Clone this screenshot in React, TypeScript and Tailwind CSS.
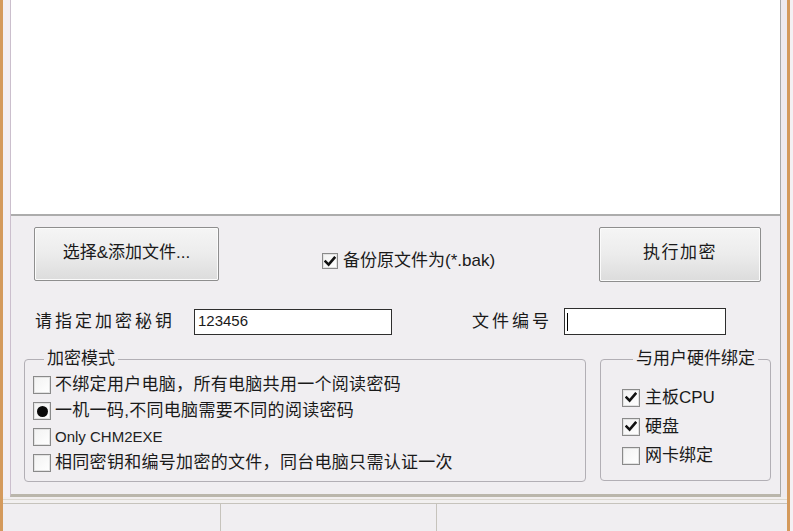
import React from 'react'

function CheckBox({ checked = false, size = 18 }: { checked?: boolean; size?: number }) {
  return (
    <span
      className="shrink-0 flex items-center justify-center border border-[#8a8a8a] bg-linear-to-br from-[#f2f2f2] to-white shadow-[inset_0_0_0_1px_#e2e2e2]"
      style={{ width: size, height: size }}
    >
      {checked && (
        <svg width="12" height="11" viewBox="0 0 12 11">
          <path d="M1.6 5.6 L4.6 8.6 L10.4 1.8" fill="none" stroke="#111" strokeWidth="2.6" strokeLinecap="square" />
        </svg>
      )}
    </span>
  )
}

function RadioBox({ checked = false }: { checked?: boolean }) {
  return (
    <span className="w-[18px] h-[18px] shrink-0 flex items-center justify-center border border-[#8a8a8a] bg-linear-to-br from-[#f2f2f2] to-white shadow-[inset_0_0_0_1px_#e2e2e2]">
      {checked && <span className="w-[11px] h-[11px] rounded-full bg-[#0a0a0a]" />}
    </span>
  )
}

function Button({ label, className }: { label: string; className: string }) {
  return (
    <button
      className={
        'flex items-start justify-center pt-[15px] border border-[#8e8e8e] rounded-[2px] bg-linear-to-b from-[#f5f5f5] via-[#ececec] to-[#dcdcdc] shadow-[inset_0_0_0_1px_#fbfbfb] text-[17px] leading-[20px] text-[#1a1a1a] ' +
        className
      }
    >
      {label}
    </button>
  )
}

const modes = [
  { type: 'check', label: '不绑定用户电脑，所有电脑共用一个阅读密码', on: false },
  { type: 'radio', label: '一机一码,不同电脑需要不同的阅读密码', on: true },
  { type: 'check', label: 'Only CHM2EXE', on: false },
  { type: 'check', label: '相同密钥和编号加密的文件，同台电脑只需认证一次', on: false },
]

const hardware = [
  { label: '主板CPU', on: true },
  { label: '硬盘', on: true },
  { label: '网卡绑定', on: false },
]

export default function App() {
  return (
    <div className="w-[793px] h-[531px] flex overflow-hidden bg-[#f0eef1] text-[#1a1a1a] font-['Liberation_Sans','Noto_Sans_CJK_SC',sans-serif]">
      {/* left window edge */}
      <div className="w-[3px] shrink-0 bg-[#d49a5c]" />

      <div className="flex-1 flex flex-col">
        <div className="flex h-[497px]">
          <div className="w-[7px] shrink-0 bg-[#f3eff3]" />

          {/* main panel */}
          <div className="w-[771px] shrink-0 flex flex-col border-l border-l-[#cbbfcd] border-r border-r-[#a9a9a9] border-b-[3px] border-b-[#bab6ab]">
            {/* file list */}
            <div className="h-[216px] shrink-0 bg-white border-b-2 border-b-[#acacac]" />

            {/* buttons row */}
            <div className="flex items-start mt-[11px] pl-[23px] pr-[19px]">
              <Button label="选择&添加文件..." className="w-[185px] h-[54px]" />
              <label className="flex items-center gap-[5px] ml-[103px] mt-[24px] text-[17px] leading-[20px]">
                <CheckBox checked size={16} />
                <span>备份原文件为(*.bak)</span>
              </label>
              <Button label="执行加密" className="ml-auto w-[162px] h-[55px] tracking-[1.5px]" />
            </div>

            {/* key row */}
            <div className="flex items-center mt-[26px] pl-[24px] h-[27px]">
              <span className="w-[159px] shrink-0 text-[17px] leading-[20px] tracking-[3px]">请指定加密秘钥</span>
              <div className="w-[198px] h-[26px] border border-[#2e2e2e] bg-white flex items-center pl-[3px] text-[15px]">
                123456
              </div>
              <span className="ml-[80px] w-[92px] shrink-0 text-[17px] leading-[20px] tracking-[3px]">文件编号</span>
              <div className="w-[162px] h-[27px] border border-[#2e2e2e] bg-white flex items-center pl-[2px]">
                <span className="w-px h-[18px] bg-black" />
              </div>
            </div>

            {/* group boxes */}
            <div className="flex items-start mt-[15px] pl-[13px]">
              <fieldset className="w-[562px] h-[132px] border border-[#b2afb5] rounded-[4px] pl-[8px]">
                <legend className="ml-[11px] px-[3px] text-[17px] leading-[18px]">加密模式</legend>
                <div className="flex flex-col pt-[4px]">
                  {modes.map((m) => (
                    <div key={m.label} className="flex items-center h-[26px] gap-[4px]">
                      {m.type === 'radio' ? <RadioBox checked={m.on} /> : <CheckBox checked={m.on} />}
                      <span
                        className={
                          m.label.startsWith('Only')
                            ? 'text-[15px] leading-[20px] text-[#222]'
                            : 'text-[17px] leading-[20px] tracking-[0.3px]'
                        }
                      >
                        {m.label}
                      </span>
                    </div>
                  ))}
                </div>
              </fieldset>

              <fieldset className="ml-[14px] w-[171px] h-[131px] border border-[#b2afb5] rounded-[4px] pl-[21px]">
                <legend className="ml-[11px] px-[3px] text-[17px] leading-[18px]">与用户硬件绑定</legend>
                <div className="flex flex-col pt-[15px]">
                  {hardware.map((h) => (
                    <div key={h.label} className="flex items-center h-[29px] gap-[5px]">
                      <CheckBox checked={h.on} />
                      <span className="text-[17px] leading-[20px]">{h.label}</span>
                    </div>
                  ))}
                </div>
              </fieldset>
            </div>
          </div>

          <div className="w-[6px] shrink-0 bg-[#eeeaee]" />
        </div>

        {/* status bar */}
        <div className="flex-1 flex flex-col">
          <div className="h-[2px] bg-[#f1eeee]" />
          <div className="h-px bg-[#dcd8d1]" />
          <div className="h-[3px] bg-[#f2f0f0]" />
          <div className="h-px bg-[#c6c3bc]" />
          <div className="flex-1 flex">
            <div className="w-[218px] border-r border-[#c6c3bc]" />
            <div className="w-[216px] border-r border-[#c6c3bc]" />
            <div className="flex-1" />
          </div>
        </div>
      </div>

      {/* right window edge */}
      <div className="w-[3px] shrink-0 bg-[#d49a5c]" />
      <div className="w-[3px] shrink-0 bg-[#f4f0f4]" />
    </div>
  )
}
